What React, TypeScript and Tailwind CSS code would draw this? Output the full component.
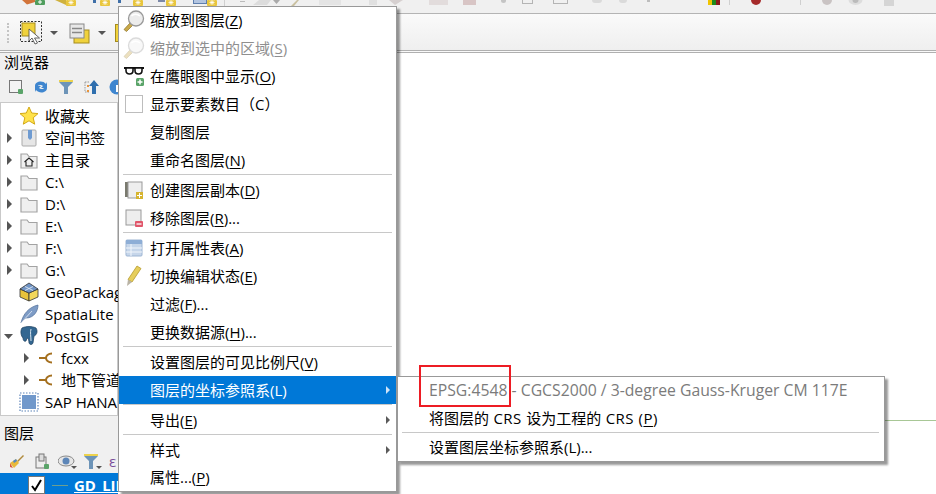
import React from "react";

const FONT = "font-['Open_Sans','Noto_Sans_CJK_SC',sans-serif]";

function Arrow({ down = false }: { down?: boolean }) {
  return (
    <svg width="10" height="10" viewBox="0 0 10 10" className="shrink-0">
      {down ? <path d="M0 3h9L4.500 8z" fill="#555" /> : <path d="M3 0l5 5-5 5z" fill="#555" />}
    </svg>
  );
}

const Folder = () => (
  <svg width="18" height="17" viewBox="0 0 18 17">
    <path d="M1 2h6l2 2.500h8V16H1z" fill="#efefef" stroke="#a3a3a3" strokeWidth="1.200" />
  </svg>
);
const Star = () => (
  <svg width="20" height="20" viewBox="0 0 20 20">
    <path d="M10 1l2.700 6 6.300.6-4.800 4.200 1.500 6.400L10 14.800l-5.700 3.400 1.500-6.400L1 7.600 7.300 7z" fill="#ffe24a" stroke="#d3a916" strokeWidth="1" />
  </svg>
);
const Bookmark = () => (
  <svg width="18" height="18" viewBox="0 0 18 18">
    <rect x="2" y="1" width="14" height="16" rx="1" fill="#e6e6e6" stroke="#aaa" />
    <path d="M8 1h4v8l-2 2-2-2z" fill="#6f9bd1" />
  </svg>
);
const Home = () => (
  <svg width="18" height="17" viewBox="0 0 18 17">
    <path d="M1 2h6l2 2.500h8V16H1z" fill="#efefef" stroke="#a3a3a3" strokeWidth="1.200" />
    <path d="M4.500 10L9 6l4.500 4M6 9.500V14h6V9.500" fill="none" stroke="#222" strokeWidth="1.100" />
  </svg>
);
const Cube = () => (
  <svg width="20" height="20" viewBox="0 0 20 20">
    <path d="M1 7l9 4v8l-9-4z" fill="#e8c23a" stroke="#333" strokeWidth=".8" />
    <path d="M19 7l-9 4v8l9-4z" fill="#f2d75a" stroke="#333" strokeWidth=".8" />
    <path d="M10 1l9 6-9 4-9-4z" fill="#6f93c4" stroke="#333" strokeWidth=".8" />
    <path d="M6 4.500l8 4M14 4.500l-8 4" stroke="#dce6f2" strokeWidth=".9" />
  </svg>
);
const Feather = () => (
  <svg width="20" height="20" viewBox="0 0 20 20">
    <path d="M2 19C4 10 10 3 19 1c0 6-4 13-12 13l-3 2z" fill="#7e9cc6" stroke="#4d6c97" strokeWidth=".7" />
    <path d="M2 19L13 7" stroke="#e6eef8" strokeWidth=".8" />
  </svg>
);
const Elephant = () => (
  <svg width="20" height="20" viewBox="0 0 20 20">
    <path d="M3 2c4-2 10-2 14 0 2 3 1 7-2 8l-1 7c-1 2-3 2-4 0 0-3-1-5-2-5l-1 3c-2 1-3-1-3-3C2 10 1 5 3 2z" fill="#336791" stroke="#1d3d5c" strokeWidth=".7" />
    <path d="M12 3c-1 3 0 8 0 12" stroke="#dbe7f1" strokeWidth="1" fill="none" />
  </svg>
);
const Connector = () => (
  <svg width="14" height="12" viewBox="0 0 14 12">
    <path d="M0 6h7M13 1.500C9 1.500 7 4 7 6s2 4.500 6 4.500" fill="none" stroke="#a5701f" strokeWidth="2" />
  </svg>
);
const Sap = () => (
  <svg width="20" height="20" viewBox="0 0 20 20">
    <rect x="3" y="3" width="14" height="14" fill="#7098cb" />
    <rect x="1" y="1" width="18" height="18" fill="none" stroke="#5c83b8" strokeWidth="1.200" strokeDasharray="1.500 1.500" />
  </svg>
);

const tree = [
  { label: "收藏夹", icon: <Star />, arrow: false },
  { label: "空间书签", icon: <Bookmark />, arrow: true },
  { label: "主目录", icon: <Home />, arrow: true },
  { label: "C:\\", icon: <Folder />, arrow: true },
  { label: "D:\\", icon: <Folder />, arrow: true },
  { label: "E:\\", icon: <Folder />, arrow: true },
  { label: "F:\\", icon: <Folder />, arrow: true },
  { label: "G:\\", icon: <Folder />, arrow: true },
  { label: "GeoPackage", icon: <Cube />, arrow: false },
  { label: "SpatiaLite", icon: <Feather />, arrow: false },
];

function TreeRow({ label, icon, arrow, down, indent }: { label: string; icon: React.ReactNode; arrow?: boolean; down?: boolean; indent?: boolean }) {
  return (
    <div className={`flex items-center h-[22px] whitespace-nowrap ${indent ? "pl-[17px]" : ""}`}>
      <span className="w-[15px] flex justify-center shrink-0">{arrow && <Arrow down={down} />}</span>
      <span className={`flex justify-center shrink-0 ${indent ? "w-[25px]" : "w-[26px]"}`}>{icon}</span>
      <span className="ml-[3px] text-[15px] text-black">{label}</span>
    </div>
  );
}

const Magnifier = ({ faded = false }: { faded?: boolean }) => (
  <svg width="22" height="22" viewBox="0 0 22 22" opacity={faded ? 0.35 : 1}>
    <path d="M1 19.500L7 13l2.500 2.500-6 6z" fill="#c9a94a" stroke="#8c7226" strokeWidth=".7" />
    <circle cx="13" cy="8.500" r="7.500" fill="#ececec" stroke="#999" strokeWidth="1.300" />
    <path d="M8.500 6c2-2.500 6-2.500 8.500 0" stroke="#fff" strokeWidth="1.500" fill="none" />
  </svg>
);
const Glasses = () => (
  <svg width="22" height="22" viewBox="0 0 22 22">
    <path d="M1 3h20" stroke="#111" strokeWidth="2" />
    <path d="M3 3h7v2.500c0 2.500-1.500 3.500-3.500 3.500S3 8 3 5.500zM12 3h7v2.500c0 2.500-1.500 3.500-3.500 3.500S12 8 12 5.500z" fill="#fff" stroke="#111" strokeWidth="1.600" />
    <rect x="13" y="13" width="8" height="8" rx="1.500" fill="#5aa469" />
    <path d="M17 14.500v5M14.500 17h5" stroke="#fff" strokeWidth="1.500" />
  </svg>
);
const Duplicate = () => (
  <svg width="20" height="20" viewBox="0 0 20 20">
    <rect x="1" y="2" width="14" height="15" fill="#7a7a6e" />
    <rect x="4" y="2" width="14" height="16" fill="#eeeeee" stroke="#999" />
    <rect x="12" y="12" width="7" height="7" fill="#d6b42f" />
    <path d="M15.500 13v5M13 15.500h5" stroke="#fff" strokeWidth="1" />
  </svg>
);
const RemoveIcon = () => (
  <svg width="20" height="20" viewBox="0 0 20 20">
    <rect x="2" y="2" width="15" height="15" fill="#eeeeee" stroke="#999" />
    <rect x="11" y="13" width="8" height="6" rx="1" fill="#e0566a" />
    <path d="M12.500 16h5" stroke="#fff" strokeWidth="1.300" />
  </svg>
);
const TableIcon = () => (
  <svg width="18" height="18" viewBox="0 0 18 18">
    <rect x="1" y="1" width="16" height="16" rx="1" fill="#c6d6ea" stroke="#9db5d3" />
    <rect x="1" y="1" width="16" height="4" fill="#8eaed6" />
    <path d="M6 5v12M1 9h16M1 13h16" stroke="#f2f6fb" strokeWidth="1" />
  </svg>
);
const Pencil = () => (
  <svg width="18" height="22" viewBox="0 0 18 22">
    <path d="M12 1l4 2.500-9 13.500-4-2.500z" fill="#e6ce5c" stroke="#b69b2c" strokeWidth=".8" />
    <path d="M3 14.500l4 2.500-5 4z" fill="#b9b3a5" />
  </svg>
);

type Item = { text: React.ReactNode; icon?: React.ReactNode; disabled?: boolean; active?: boolean; sub?: boolean } | "sep";
const U = ({ c }: { c: string }) => <u className="underline underline-offset-2">{c}</u>;

const items: Item[] = [
  { text: <>缩放到图层(<U c="Z" />)</>, icon: <Magnifier /> },
  { text: <>缩放到选中的区域(<U c="S" />)</>, icon: <Magnifier faded />, disabled: true },
  { text: <>在鹰眼图中显示(<U c="O" />)</>, icon: <Glasses /> },
  { text: <>显示要素数目（C）</>, icon: <span className="block w-[18px] h-[18px] border border-[#bdbdbd] bg-white" /> },
  { text: <>复制图层</> },
  { text: <>重命名图层(<U c="N" />)</> },
  "sep",
  { text: <>创建图层副本(<U c="D" />)</>, icon: <Duplicate /> },
  { text: <>移除图层(<U c="R" />)...</>, icon: <RemoveIcon /> },
  "sep",
  { text: <>打开属性表(<U c="A" />)</>, icon: <TableIcon /> },
  { text: <>切换编辑状态(<U c="E" />)</>, icon: <Pencil /> },
  { text: <>过滤(<U c="F" />)...</> },
  { text: <>更换数据源(<U c="H" />)...</> },
  "sep",
  { text: <>设置图层的可见比例尺(<U c="V" />)</> },
  { text: <>图层的坐标参照系(L)</>, active: true, sub: true },
  "sep",
  { text: <>导出(<U c="E" />)</>, sub: true },
  "sep",
  { text: <>样式</>, sub: true },
  { text: <>属性...(<U c="P" />)</> },
];

function SubArrow({ light }: { light?: boolean }) {
  return (
    <svg width="6" height="10" viewBox="0 0 6 10" className="absolute right-[5px] top-[9px]">
      <path d="M1 1l4 4-4 4z" fill={light ? "#cfe3f7" : "#5a5a5a"} />
    </svg>
  );
}

function Sep({ inset }: { inset: string }) {
  return <div className={`h-[2px] ${inset} border-t border-[#c8c8c8]`} />;
}

function Badge({ className = "" }: { className?: string }) {
  return (
    <svg width="10" height="6" viewBox="0 0 10 6" className={`shrink-0 ${className}`}>
      <rect width="10" height="6" rx="1" fill="#e9c63c" />
      <path d="M5 0v5M2.500 2.500h5M3 .500l4 4M7 .500l-4 4" stroke="#fff" strokeWidth=".8" />
    </svg>
  );
}

const Tick = ({ className = "" }: { className?: string }) => <span className={`block w-[3px] h-[3px] bg-[#3f6fa8] shrink-0 ${className}`} />;

export default function App() {
  return (
    <div className={`relative w-[936px] h-[494px] overflow-hidden bg-white flex flex-col ${FONT}`}>
      {/* top toolbar */}
      <div className="h-[14px] shrink-0 bg-[#f0f0f0] border-b border-[#b4b4b4] flex items-start overflow-hidden">
        <svg width="13" height="5" viewBox="0 0 13 5" className="ml-[22px] shrink-0"><path d="M0 0h13v2L5 4.500z" fill="#d2743a" /></svg>
        <svg width="11" height="5" viewBox="0 0 11 5" className="shrink-0"><rect width="10" height="5" rx="1" fill="#4f9d5d" /><path d="M5 0v4M3 2h4" stroke="#fff" /></svg>
        <svg width="11" height="5" viewBox="0 0 11 5" className="ml-[9px] shrink-0"><path d="M0 0h11v5z" fill="#cfb13e" /></svg>
        <Badge />
        <Tick className="ml-[17px]" />
        <Badge className="ml-[4px]" />
        <Tick className="ml-[8px]" />
        <Badge className="ml-[12px]" />
        <span className="block w-[7px] h-[2px] bg-[#7b88a8] shrink-0 ml-[15px]" />
        <Badge className="ml-[1px]" />
        <span className="block w-[14px] h-[4px] bg-[#b3c5e0] border-x border-b border-[#5f7fae] shrink-0 ml-[17px]" />
        <Badge />
        <span className="block w-[1px] h-[6px] bg-[#d0d0d0] shrink-0 ml-[7px]" />
        <span className="block w-[5px] h-[1px] bg-[#bbb] shrink-0 ml-[15px] mt-[1px]" />
        <svg width="20" height="5" viewBox="0 0 20 5" className="ml-[8px] shrink-0"><path d="M0 5L6 0h12l-4 5z" fill="#dcdcdc" /></svg>
        <svg width="7" height="4" viewBox="0 0 7 4" className="shrink-0"><path d="M0 0h7L3.500 4z" fill="#aaa" /></svg>
        <svg width="8" height="6" viewBox="0 0 8 6" className="ml-[11px] shrink-0"><path d="M0 6L6 0h2L3 6z" fill="#c9c0a0" /></svg>
        <span className="block w-[22px] h-[5px] bg-[#e4e4e4] shrink-0 ml-[20px]" />
        <span className="block w-[8px] h-[5px] bg-[#e0e0e0] shrink-0 ml-[28px]" />
        <svg width="15" height="5" viewBox="0 0 15 5" className="ml-[12px] shrink-0"><path d="M0 0l6 5 8-5z" fill="#d6d0d0" /></svg>
        <svg width="19" height="5" viewBox="0 0 19 5" className="ml-[25px] shrink-0"><rect width="19" height="5" fill="#e2dcdc" /></svg>
        <span className="block w-[13px] h-[5px] bg-[#d8c5c5] shrink-0 ml-[15px]" />
        <span className="block w-[5px] h-[3px] rounded-b-full bg-[#c4c4c4] shrink-0 ml-[25px]" />
        <span className="block w-[11px] h-[4px] border border-t-0 border-[#b4b4b4] shrink-0 ml-[16px]" />
        <span className="block w-[15px] h-[4px] border border-t-0 border-[#b4b4b4] shrink-0 ml-[20px]" />
        <span className="block w-[10px] h-[3px] rounded-b-full bg-[#dadada] shrink-0 ml-[24px]" />
        <span className="block w-[8px] h-[3px] rounded-b-full bg-[#dadada] shrink-0 ml-[17px]" />
        <span className="block w-[3px] h-[2px] bg-[#bdbdbd] shrink-0 ml-[20px]" />
        <svg width="12" height="5" viewBox="0 0 12 5" className="ml-[58px] shrink-0"><rect width="4" height="5" fill="#f0c400" /><rect x="4" width="4" height="5" fill="#1d8a1d" /><rect x="8" width="4" height="5" fill="#8a1a1a" /></svg>
        <span className="block w-[1px] h-[5px] bg-[#cfcfcf] shrink-0 ml-[9px]" />
        <span className="block w-[10px] h-[5px] rounded-b-full bg-[#a52a2a] shrink-0 ml-[21px]" />
        <span className="block w-[1px] h-[5px] bg-[#cfcfcf] shrink-0 ml-[39px]" />
        <span className="block w-[10px] h-[5px] rounded-b-full bg-[#c9c3c3] shrink-0 ml-[21px]" />
        <svg width="15" height="6" viewBox="0 0 15 6" className="ml-[16px] shrink-0"><ellipse cx="7.500" cy="0" rx="7" ry="5" fill="#ddd" /><circle cx="7.500" cy="0" r="3" fill="#bbb" /></svg>
        <span className="block w-[10px] h-[6px] bg-[#d5d5d5] shrink-0 ml-[21px]" />
      </div>

      {/* second toolbar */}
      <div className="h-[39px] shrink-0 bg-gradient-to-b from-[#fafafa] to-[#efefef] border-b-[3px] border-double border-[#b0b0b0] flex items-center pl-[7px] pt-[2px]">
        <span className="block w-[3px] h-[20px] border-l-2 border-dotted border-[#c4c4c4] shrink-0" />
        <svg width="24" height="24" viewBox="0 0 24 24" className="ml-[10px] shrink-0">
          <rect x="0.500" y="0.500" width="21" height="20" fill="none" stroke="#333" strokeDasharray="2 1.500" />
          <rect x="2" y="2" width="13" height="13" fill="#f0d23c" stroke="#a58c1e" />
          <path d="M9 8l0 12 3-3 3 6 2.500-1-3-5h5z" fill="#fff" stroke="#555" strokeWidth=".9" />
        </svg>
        <svg width="10" height="6" viewBox="0 0 10 6" className="ml-[5px] shrink-0"><path d="M1 1h8L5 5z" fill="#555" /></svg>
        <svg width="21" height="21" viewBox="0 0 21 21" className="ml-[10px] shrink-0">
          <rect x="5" y="7" width="15" height="13" fill="#f0d23c" stroke="#a58c1e" />
          <rect x="1" y="1" width="14" height="14" fill="#e8e8e8" stroke="#888" />
          <path d="M3 5.500h10M3 9.500h10" stroke="#888" strokeWidth="1.300" />
        </svg>
        <svg width="10" height="6" viewBox="0 0 10 6" className="ml-[7px] shrink-0"><path d="M1 1h8L5 5z" fill="#555" /></svg>
        <span className="block w-[10px] h-[18px] bg-[#f0d23c] border border-[#a58c1e] shrink-0 ml-[8px]" />
      </div>

      {/* main */}
      <div className="flex-1 flex min-h-0">
        <div className="w-[118px] shrink-0 bg-[#f0f0f0] flex flex-col">
          <div className="h-[19px] pl-[4px] text-[15px] leading-[19px] text-black shrink-0">浏览器</div>
          <div className="h-[30px] flex items-center pl-[8px] gap-[9px] shrink-0">
            <svg width="16" height="16" viewBox="0 0 16 16" className="shrink-0"><rect x="1.500" y="1.500" width="12" height="12" fill="#f4f4f4" stroke="#777" /><rect x="10" y="10" width="5" height="5" rx="1" fill="#5aa469" /></svg>
            <svg width="16" height="16" viewBox="0 0 16 16" className="shrink-0"><path d="M2 7c0-5 8-6 11-2l1-2v6H8l2-2c-2-2-5-1-6 1zM14 9c0 5-8 6-11 2l-1 2V7h6L6 9c2 2 5 1 6-1z" fill="#3f86cf" /></svg>
            <svg width="16" height="16" viewBox="0 0 16 16" className="shrink-0"><path d="M1 1h14v2L10 8v7H6V8L1 3z" fill="#6d94b8" /><rect x="1" y="1" width="14" height="2" fill="#ecd24d" /></svg>
            <svg width="17" height="16" viewBox="0 0 17 16" className="shrink-0"><path d="M11 1l5 6h-3v8h-4V7H6z" fill="#2f6fae" /><path d="M2 3h5M2 3v10h5" fill="none" stroke="#999" strokeDasharray="1.500 1" /><rect x="4" y="6" width="2" height="2" fill="#e8933a" /><rect x="4" y="11" width="2" height="2" fill="#e8933a" /></svg>
            <svg width="16" height="16" viewBox="0 0 16 16" className="shrink-0"><circle cx="8" cy="8" r="7.500" fill="#3f86cf" /><rect x="7" y="6" width="2" height="7" fill="#fff" /></svg>
          </div>
          <div className="h-[314px] shrink-0 bg-white border border-[#c9c9c9] pt-[2px]">
            {tree.map((t) => (
              <TreeRow key={t.label} label={t.label} icon={t.icon} arrow={t.arrow} />
            ))}
            <TreeRow label="PostGIS" icon={<Elephant />} arrow down />
            <TreeRow label="fcxx" icon={<Connector />} arrow indent />
            <TreeRow label="地下管道" icon={<Connector />} arrow indent />
            <TreeRow label="SAP HANA" icon={<Sap />} />
          </div>
          <div className="h-[34px] pl-[4px] text-[15px] leading-[34px] text-black shrink-0">图层</div>
          <div className="h-[23px] flex items-center pl-[8px] shrink-0">
            <svg width="17" height="17" viewBox="0 0 17 17" className="shrink-0"><path d="M9 8l6-6 1 1-6 6z" fill="#b08a3c" /><path d="M2 10l6-4 3 4-5 5z" fill="#e8b93c" /><path d="M2 10l3 5-3-1z" fill="#d8573a" /><path d="M5 8l3-2 1 2-3 2z" fill="#4f86c6" /></svg>
            <svg width="16" height="17" viewBox="0 0 16 17" className="ml-[9px] shrink-0"><rect x="2" y="4" width="10" height="11" fill="#eee" stroke="#777" /><rect x="5" y="1" width="5" height="7" fill="#ddd" stroke="#777" /><rect x="10" y="11" width="5" height="5" rx="1" fill="#5aa469" /></svg>
            <svg width="20" height="17" viewBox="0 0 20 17" className="ml-[8px] shrink-0"><ellipse cx="8" cy="8" rx="8" ry="5" fill="#e6e6e6" stroke="#888" /><circle cx="8" cy="8" r="3.500" fill="#5d86b8" /><path d="M13 13h6l-3 3z" fill="#555" /></svg>
            <svg width="20" height="17" viewBox="0 0 20 17" className="ml-[5px] shrink-0"><path d="M1 1h14v2l-5 5v8H6V8L1 3z" fill="#6d94b8" /><rect x="1" y="1" width="14" height="2" fill="#ecd24d" /><path d="M13 13h6l-3 3z" fill="#555" /></svg>
            <span className="ml-[6px] text-[15px] leading-none text-[#7a4f9a]">ε</span>
          </div>
          <div className="flex-1 bg-[#0078d7] flex items-start pl-[28px] pt-[3px] min-h-0">
            <span className="w-[17px] h-[18px] bg-white border border-[#777] flex items-center justify-center shrink-0">
              <svg width="13" height="13" viewBox="0 0 13 13"><path d="M2 7l3 4 6-10" fill="none" stroke="#000" strokeWidth="2" /></svg>
            </span>
            <span className="block w-[16px] h-[1px] bg-[#6d9f8f] mt-[9px] ml-[7px] shrink-0" />
            <span className="ml-[6px] text-[15px] leading-[18px] font-bold text-white underline whitespace-nowrap">GD_LINE</span>
          </div>
        </div>

        {/* canvas */}
        <div className="flex-1 bg-white" />
      </div>

      {/* thin feature line on canvas */}
      <div className="absolute left-[885px] right-0 top-[420px] h-[1px] bg-[#a8c796]" />

      {/* context menu */}
      <div className="absolute left-[118px] top-[6px] w-[279px] bg-white border border-[#999] shadow-[3px_3px_2px_rgba(0,0,0,0.4)]">
        {items.map((it, i) =>
          it === "sep" ? (
            <Sep key={i} inset="ml-[4px] mr-[4px]" />
          ) : (
            <div key={i} className={`relative flex items-center whitespace-nowrap text-[15px] ${i === 0 || i === items.length - 1 ? "h-[27px]" : "h-[28px]"} ${it.active ? "bg-[#0078d7] text-white" : it.disabled ? "text-[#8f8f8f]" : "text-black"}`}>
              <span className="w-[32px] flex justify-center shrink-0 ml-[-1px]">{it.icon}</span>
              <span>{it.text}</span>
              {it.sub && <SubArrow light={it.active} />}
            </div>
          ),
        )}
      </div>

      {/* submenu */}
      <div className="absolute left-[397px] top-[376px] w-[488px] h-[86px] bg-white border border-[#999] shadow-[3px_3px_2px_rgba(0,0,0,0.4)]">
        <div className="h-[27px] flex items-center pl-[31px] text-[15.75px] text-[#7b7b7b] whitespace-nowrap">EPSG:4548 - CGCS2000 / 3-degree Gauss-Kruger CM 117E</div>
        <div className="h-[28px] flex items-center pl-[31px] text-[15px] text-black whitespace-nowrap">
          <span>将图层的<span className="tracking-[0.5px]"> CRS </span>设为工程的<span className="tracking-[0.5px]"> CRS (<U c="P" />)</span></span>
        </div>
        <Sep inset="ml-[4px] mr-[5px]" />
        <div className="h-[27px] flex items-center pl-[31px] text-[15px] text-black whitespace-nowrap">设置图层坐标参照系(L)...</div>
      </div>

      {/* red annotation rectangle */}
      <div className="absolute left-[419px] top-[365px] w-[92px] h-[42px] border-2 border-[#ed1c24] pointer-events-none" />
    </div>
  );
}
